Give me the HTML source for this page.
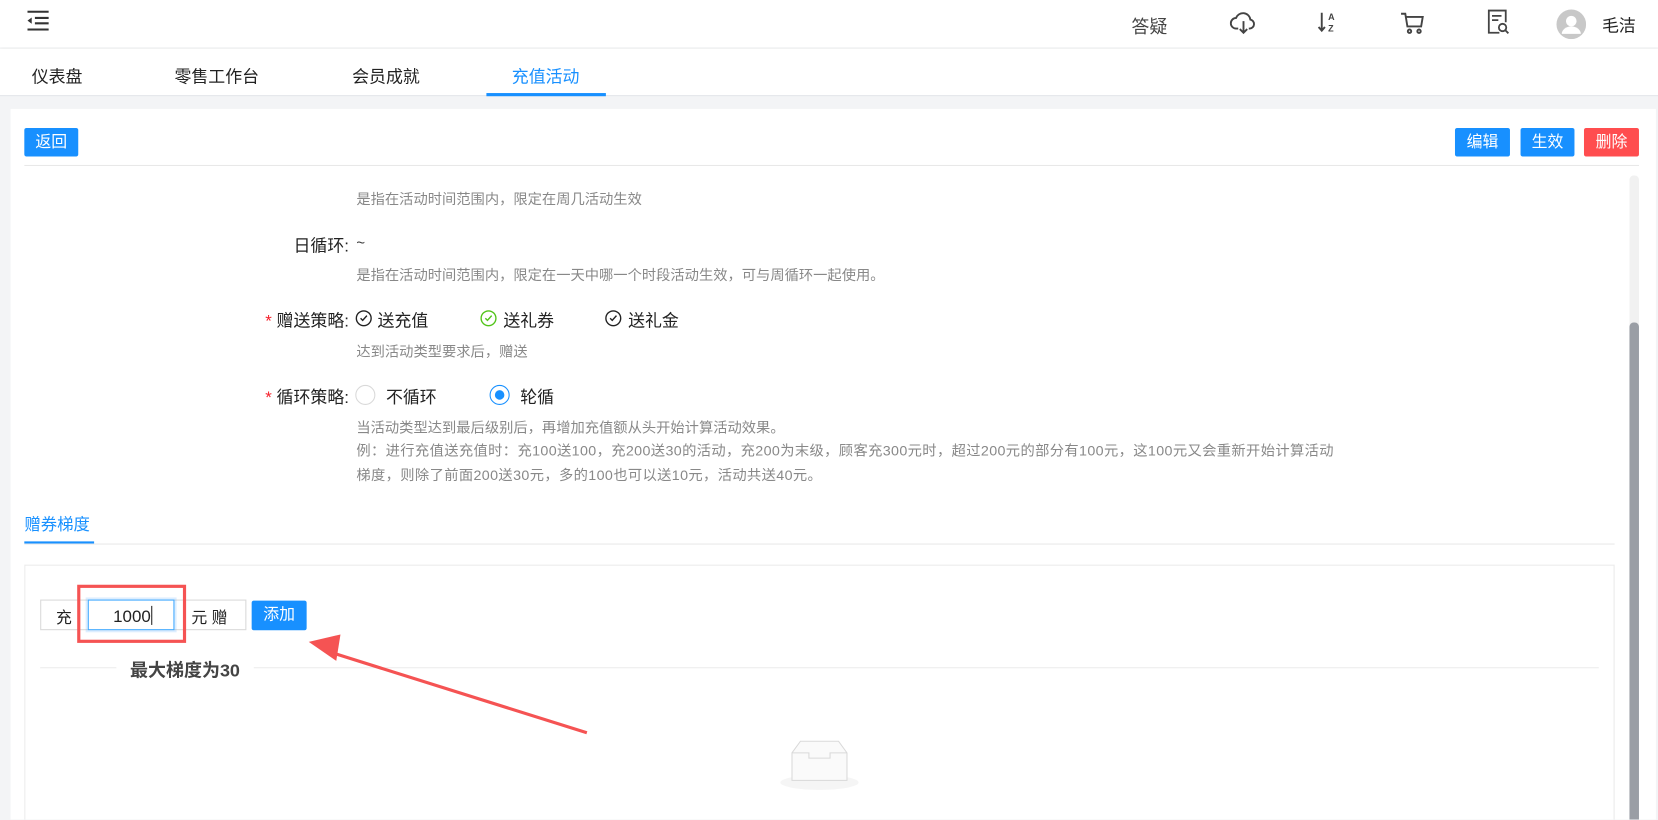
<!DOCTYPE html>
<html><head><meta charset="utf-8"><style>
*{box-sizing:border-box;margin:0;padding:0}
html,body{width:1658px;height:819px;overflow:hidden;background:#f3f4f6}
body{font-family:"Liberation Sans","Noto Sans CJK SC",sans-serif;color:#333}
#w{position:absolute;left:0;top:0;width:1568px;height:775px;transform:scale(1.05740);transform-origin:0 0;background:#f3f4f6;overflow:hidden}
.a{position:absolute;white-space:nowrap}
.hdr{left:0;top:0;width:1568px;height:45px;background:#fff;box-shadow:0 1px 3px rgba(0,0,0,.08)}
.tabs{left:0;top:46px;width:1568px;height:45px;background:#fff;border-bottom:1px solid #e2e4e8}
.tab{font-size:16px;top:59px;color:#222}
.card{left:10px;top:103px;width:1556px;height:680px;background:#fff}
.btn{height:27px;line-height:27px;color:#fff;font-size:15px;text-align:center;border-radius:2px;background:#1890ff}
.lbl{font-size:16px;color:#222;text-align:right}
.help{font-size:13.5px;color:#888}
.help2{font-size:13.5px;color:#888;letter-spacing:.35px}
.star{color:#f5222d}
</style></head><body><div id="w">
<div class="a hdr"></div>
<svg class="a" style="left:25px;top:10px" width="22" height="19" viewBox="0 0 22 19"><g stroke="#333" stroke-width="2"><line x1="1" y1="1" x2="21" y2="1"/><line x1="8" y1="7" x2="21" y2="7"/><line x1="8" y1="12" x2="21" y2="12"/><line x1="1" y1="18" x2="21" y2="18"/></g><path d="M1 9.5L5 6.5V12.5Z" fill="#333"/></svg>
<div class="a" style="left:1070px;top:11px;font-size:17px;color:#444">答疑</div>
<svg class="a" style="left:1163px;top:11px" width="26" height="22" viewBox="0 0 26 22" fill="none" stroke="#444" stroke-width="1.8"><path d="M8 16H6a5 5 0 0 1 0-10 7 7 0 0 1 13.5 1.5A4.3 4.3 0 0 1 19 16h-1"/><path d="M13 9v11M9.5 16.5L13 20l3.5-3.5"/></svg>
<svg class="a" style="left:1246px;top:10px" width="22" height="22" viewBox="0 0 22 22"><path d="M4 2v17M1 15.5l3 3.5 3-3.5" fill="none" stroke="#444" stroke-width="1.8"/><text x="10" y="9" font-size="8.5" font-weight="bold" fill="#444" font-family="Liberation Sans">A</text><text x="10" y="20" font-size="8.5" font-weight="bold" fill="#444" font-family="Liberation Sans">Z</text></svg>
<svg class="a" style="left:1324px;top:11px" width="24" height="22" viewBox="0 0 24 22" fill="none" stroke="#444" stroke-width="1.8"><path d="M1 2h4l2 12h13l1.5-9H6"/><circle cx="9" cy="18.5" r="1.6"/><circle cx="18" cy="18.5" r="1.6"/></svg>
<svg class="a" style="left:1406px;top:9px" width="22" height="25" viewBox="0 0 22 25" fill="none" stroke="#444" stroke-width="1.7"><path d="M12 22H2V1h16v11"/><path d="M5 6h9M5 10h6"/><circle cx="15" cy="17" r="3.5"/><path d="M17.5 19.5L20.5 22.5"/></svg>
<svg class="a" style="left:1472px;top:9px" width="28" height="28" viewBox="0 0 28 28"><circle cx="14" cy="14" r="14" fill="#c8c8c8"/><circle cx="14" cy="11" r="5" fill="#fff"/><path d="M5 23a9 7 0 0 1 18 0" fill="#fff"/></svg>
<div class="a" style="left:1515px;top:11px;font-size:16px;color:#222">毛洁</div>

<div class="a tabs"></div>
<div class="a tab" style="left:30px">仪表盘</div>
<div class="a tab" style="left:165px">零售工作台</div>
<div class="a tab" style="left:333px">会员成就</div>
<div class="a tab" style="left:484px;color:#1890ff">充值活动</div>
<div class="a" style="left:460px;top:88px;width:113px;height:3px;background:#1890ff"></div>

<div class="a card"></div>
<div class="a btn" style="left:23px;top:121px;width:51px">返回</div>
<div class="a btn" style="left:1376px;top:121px;width:52px">编辑</div>
<div class="a btn" style="left:1438px;top:121px;width:51px">生效</div>
<div class="a btn" style="left:1498px;top:121px;width:52px;background:#ff4d4f">删除</div>
<div class="a" style="left:23px;top:156px;width:1527px;height:1px;background:#e8e8e8"></div>
<div class="a" style="left:1541px;top:166px;width:9px;height:620px;background:#f1f1f1;border-radius:4px"></div>
<div class="a" style="left:1541px;top:305px;width:9px;height:480px;background:#9a9ea5;border-radius:4px 4px 0 0"></div>

<div class="a help" style="left:337px;top:177px">是指在活动时间范围内，限定在周几活动生效</div>
<div class="a lbl" style="left:200px;top:219px;width:130px">日循环:</div>
<div class="a" style="left:337px;top:221px;font-size:14px">~</div>
<div class="a help" style="left:337px;top:249px">是指在活动时间范围内，限定在一天中哪一个时段活动生效，可与周循环一起使用。</div>
<div class="a lbl" style="left:200px;top:290px;width:130px"><span class="star">* </span>赠送策略:</div>
<svg class="a" style="left:336px;top:293px" width="16" height="16" viewBox="0 0 16 16" fill="none" stroke="#222" stroke-width="1.3"><circle cx="8" cy="8" r="7"/><path d="M5 8l2 2 4-4.5"/></svg>
<div class="a lbl" style="left:357px;top:290px">送充值</div>
<svg class="a" style="left:454px;top:293px" width="16" height="16" viewBox="0 0 16 16" fill="none" stroke="#52c41a" stroke-width="1.3"><circle cx="8" cy="8" r="7"/><path d="M5 8l2 2 4-4.5"/></svg>
<div class="a lbl" style="left:476px;top:290px">送礼券</div>
<svg class="a" style="left:572px;top:293px" width="16" height="16" viewBox="0 0 16 16" fill="none" stroke="#222" stroke-width="1.3"><circle cx="8" cy="8" r="7"/><path d="M5 8l2 2 4-4.5"/></svg>
<div class="a lbl" style="left:594px;top:290px">送礼金</div>
<div class="a help" style="left:337px;top:321px">达到活动类型要求后，赠送</div>
<div class="a lbl" style="left:200px;top:362px;width:130px"><span class="star">* </span>循环策略:</div>
<div class="a" style="left:336px;top:364px;width:19px;height:19px;border:1px solid #d9d9d9;border-radius:50%"></div>
<div class="a lbl" style="left:365px;top:362px">不循环</div>
<div class="a" style="left:463px;top:364px;width:19px;height:19px;border:1px solid #1890ff;border-radius:50%"></div>
<div class="a" style="left:468px;top:369px;width:9px;height:9px;background:#1890ff;border-radius:50%"></div>
<div class="a lbl" style="left:492px;top:362px">轮循</div>
<div class="a help" style="left:337px;top:393px">当活动类型达到最后级别后，再增加充值额从头开始计算活动效果。</div>
<div class="a help2" style="left:337px;top:415px">例：进行充值送充值时：充100送100，充200送30的活动，充200为末级，顾客充300元时，超过200元的部分有100元，这100元又会重新开始计算活动</div>
<div class="a help2" style="left:337px;top:438px">梯度，则除了前面200送30元，多的100也可以送10元，活动共送40元。</div>

<div class="a" style="left:23px;top:484px;font-size:15.5px;color:#1890ff">赠券梯度</div>
<div class="a" style="left:23px;top:514px;width:1504px;height:1px;background:#e8e8e8"></div>
<div class="a" style="left:23px;top:512px;width:66px;height:2px;background:#1890ff"></div>
<div class="a" style="left:23px;top:534px;width:1504px;height:260px;border:1px solid #ebebeb"></div>

<div class="a" style="left:38px;top:567px;width:195px;height:29px;border:1px solid #d9d9d9;background:#fff"></div>
<div class="a" style="left:53px;top:573px;font-size:15px;color:#222">充</div>
<div class="a" style="left:83px;top:567px;width:82px;height:29px;border:1px solid #40a9ff;box-shadow:0 0 0 2px rgba(24,144,255,.15);background:#fff;font-size:16px;color:#222;padding:5px 0 0 23px">1000<span style="display:inline-block;width:1px;height:18px;background:#222;vertical-align:-3px"></span></div>
<div class="a" style="left:181px;top:573px;font-size:15px;color:#222">元 赠</div>
<div class="a btn" style="left:238px;top:568px;width:52px;height:28px;line-height:28px">添加</div>
<div class="a" style="left:73px;top:553px;width:103px;height:55px;border:3px solid #f55353"></div>

<div class="a" style="left:38px;top:631px;width:1474px;height:1px;background:#ececec"></div>
<div class="a" style="left:110px;top:620px;padding:0 13px;background:#fff;font-size:17px;font-weight:bold;color:#444">最大梯度为30</div>

<svg class="a" style="left:280px;top:595px" width="290" height="110" viewBox="280 595 290 110"><path d="M555 693L313 617" stroke="#f55353" stroke-width="3" fill="none"/><path d="M292 607L322 600L318 625Z" fill="#f55353"/></svg>

<svg class="a" style="left:737px;top:698px" width="76" height="50" viewBox="0 0 76 50"><ellipse cx="38" cy="42" rx="37" ry="7" fill="#f5f5f5"/><path d="M12 14L20 3h36l8 11v26H12Z" fill="#fafafa" stroke="#d9d9d9"/><path d="M12 14h16v5h20v-5h16" fill="none" stroke="#d9d9d9"/></svg>
</div></body></html>
